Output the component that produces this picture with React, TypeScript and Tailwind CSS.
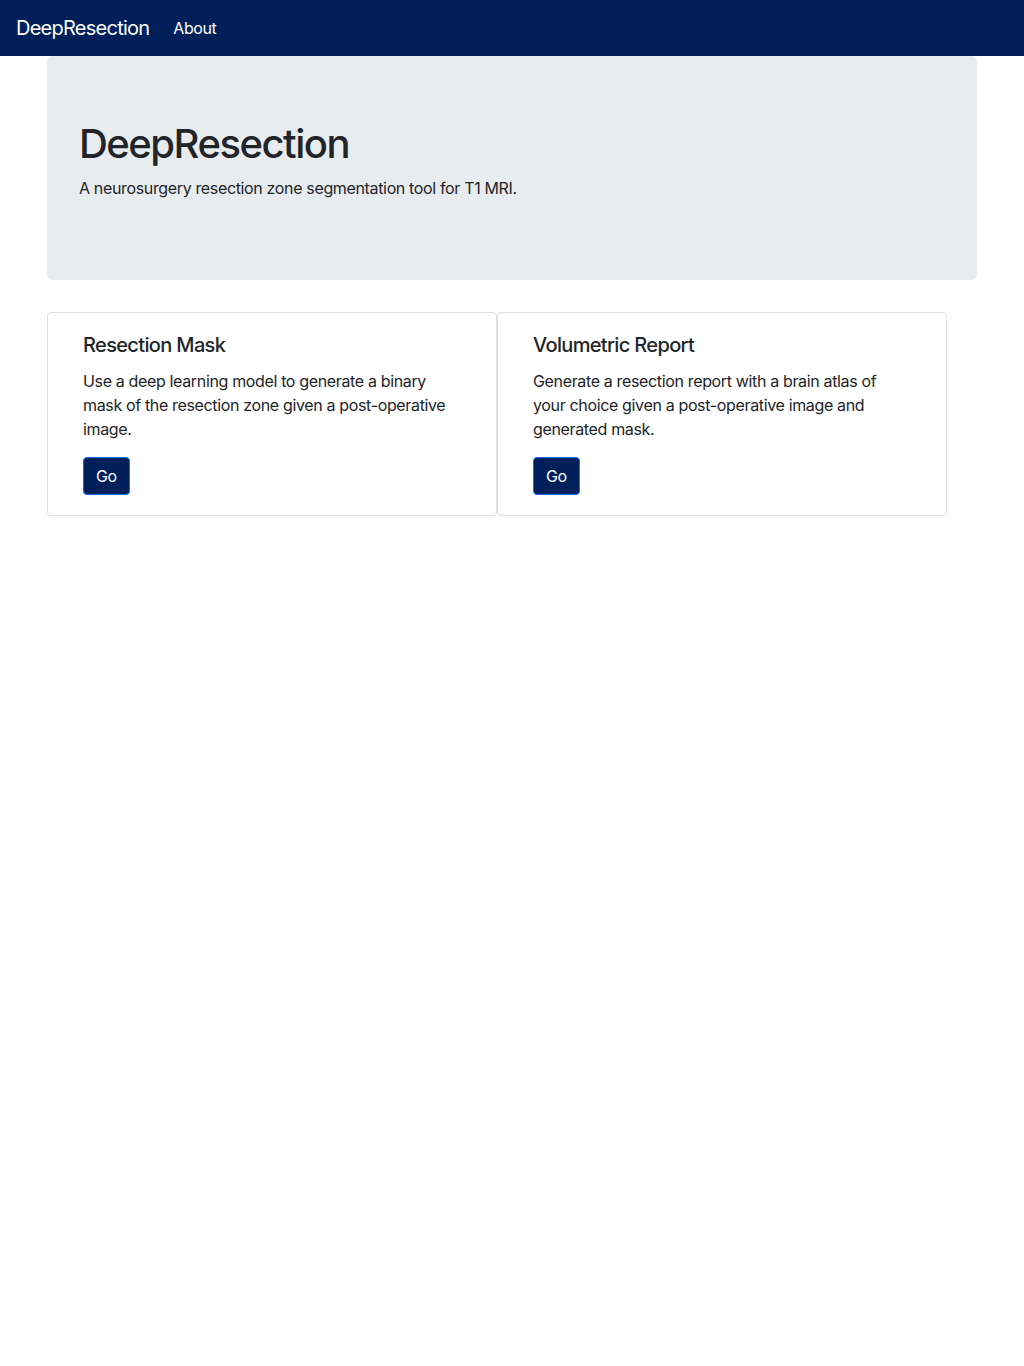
const cards = [
  {
    title: "Resection Mask",
    text: "Use a deep learning model to generate a binary mask of the resection zone given a post-operative image.",
  },
  {
    title: "Volumetric Report",
    text: "Generate a resection report with a brain atlas of your choice given a post-operative image and generated mask.",
  },
];

export default function App() {
  return (
    <div
      className="min-h-[1366px] bg-white text-[#212529] tracking-[-0.35px]"
      style={{ fontFamily: "Inter, 'Noto Sans', sans-serif" }}
    >
      {/* Navbar */}
      <nav className="h-14 bg-[#001f5b] flex items-center px-4">
        <span className="text-[20px] text-white leading-[30px] mr-6 tracking-[-0.75px]">DeepResection</span>
        <span className="text-[16px] text-white leading-6 tracking-[-0.4px]">About</span>
      </nav>

      <div className="w-[930px] mx-auto">
        {/* Jumbotron */}
        <div className="bg-[#e9ecef] rounded-[5px] px-8 py-16 mb-8">
          <h1 className="text-[40px] leading-[48px] font-medium mb-2 tracking-[-1.5px]">DeepResection</h1>
          <p className="text-[16px] leading-6 mb-4">
            A neurosurgery resection zone segmentation tool for T1 MRI.
          </p>
        </div>

        {/* Cards */}
        <div className="flex">
          {cards.map((c) => (
            <div
              key={c.title}
              className="w-[450px] border border-[#dfdfdf] rounded-[4px] px-[35px] py-5"
            >
              <h5 className="text-[20px] leading-6 font-medium mb-3 tracking-[-0.65px]">{c.title}</h5>
              <p className="text-[16px] leading-6 mb-4">{c.text}</p>
              <button className="h-[38px] px-3 bg-[#001f5b] border border-[#0d6efd] rounded-[4px] text-white text-[16px] leading-6">
                Go
              </button>
            </div>
          ))}
        </div>
      </div>
    </div>
  );
}
